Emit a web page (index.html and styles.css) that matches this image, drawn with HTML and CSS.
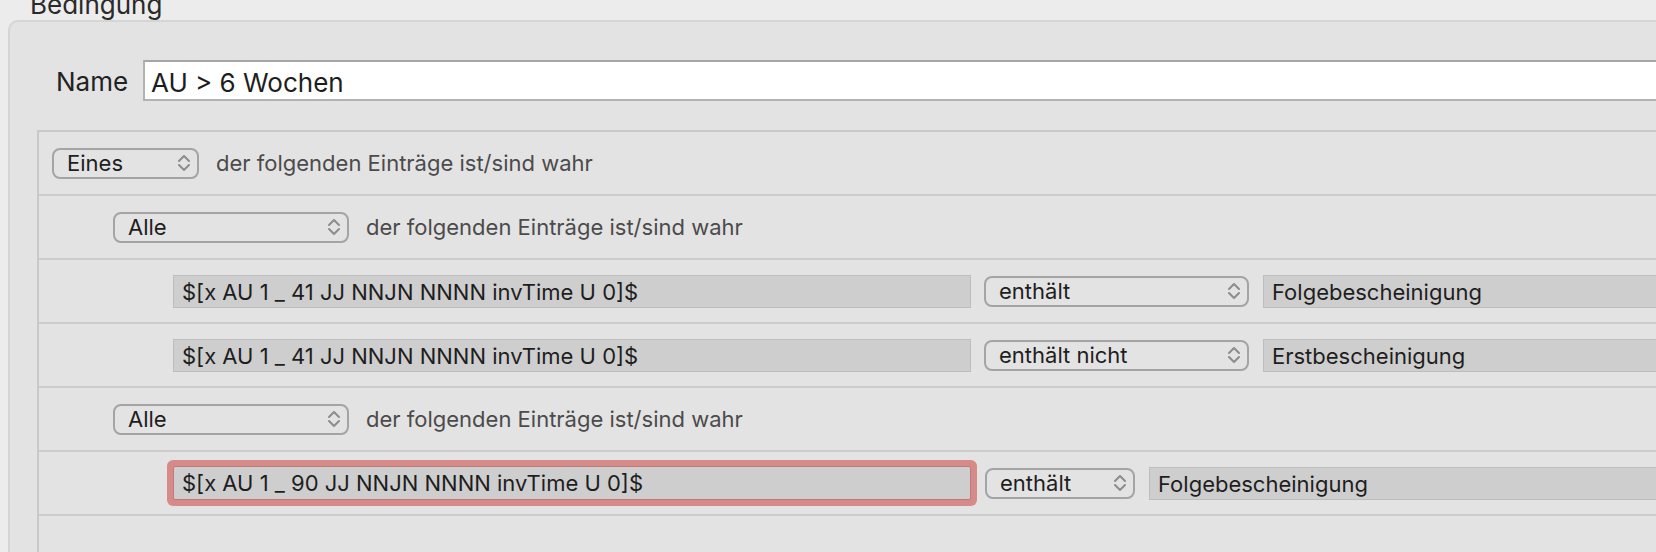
FILE: index.html
```html
<!DOCTYPE html>
<html lang="de">
<head>
<meta charset="utf-8">
<title>Bedingung</title>
<link rel="stylesheet" href="styles.css">
</head>
<body>
<div class="window">
  <div class="title">Bedingung</div>
  <div class="panel">
    <div class="name-row">
      <span class="name-label">Name</span>
      <div class="name-field">AU &gt; 6 Wochen</div>
    </div>
    <div class="rules">
      <div class="row level0">
        <div class="popup w-eines"><span>Eines</span><svg class="chev" viewBox="0 0 14 20" width="14" height="20"><polyline points="2,8 7,3 12,8"/><polyline points="2,12 7,17 12,12"/></svg></div>
        <span class="hint">der folgenden Einträge ist/sind wahr</span>
      </div>
      <div class="row level1">
        <div class="popup w-alle"><span>Alle</span><svg class="chev" viewBox="0 0 14 20" width="14" height="20"><polyline points="2,8 7,3 12,8"/><polyline points="2,12 7,17 12,12"/></svg></div>
        <span class="hint">der folgenden Einträge ist/sind wahr</span>
      </div>
      <div class="row level2">
        <div class="field key">$[x AU 1 _ 41 JJ NNJN NNNN invTime U 0]$</div>
        <div class="popup w-op"><span>enthält</span><svg class="chev" viewBox="0 0 14 20" width="14" height="20"><polyline points="2,8 7,3 12,8"/><polyline points="2,12 7,17 12,12"/></svg></div>
        <div class="field value">Folgebescheinigung</div>
      </div>
      <div class="row level2">
        <div class="field key">$[x AU 1 _ 41 JJ NNJN NNNN invTime U 0]$</div>
        <div class="popup w-op"><span>enthält nicht</span><svg class="chev" viewBox="0 0 14 20" width="14" height="20"><polyline points="2,8 7,3 12,8"/><polyline points="2,12 7,17 12,12"/></svg></div>
        <div class="field value">Erstbescheinigung</div>
      </div>
      <div class="row level1">
        <div class="popup w-alle"><span>Alle</span><svg class="chev" viewBox="0 0 14 20" width="14" height="20"><polyline points="2,8 7,3 12,8"/><polyline points="2,12 7,17 12,12"/></svg></div>
        <span class="hint">der folgenden Einträge ist/sind wahr</span>
      </div>
      <div class="row level2">
        <div class="field key focused">$[x AU 1 _ 90 JJ NNJN NNNN invTime U 0]$</div>
        <div class="popup w-op-short"><span>enthält</span><svg class="chev" viewBox="0 0 14 20" width="14" height="20"><polyline points="2,8 7,3 12,8"/><polyline points="2,12 7,17 12,12"/></svg></div>
        <div class="field value">Folgebescheinigung</div>
      </div>
      <div class="row empty"></div>
    </div>
  </div>
</div>
</body>
</html>
```

FILE: styles.css
```css
html {
  overflow: hidden;
  background: #ececec;
}

body {
  margin: 0;
  padding: 0;
  background: #ececec;
  font-family: Inter, "Liberation Sans", sans-serif;
  color: #222222;
}

.window {
  width: 1720px;
  height: 552px;
  overflow: hidden;
}

.title {
  height: 30px;
  line-height: 30px;
  margin-top: -10px;
  padding-left: 30px;
  font-size: 26px;
  color: #2a2a2a;
}

.panel {
  margin-left: 8px;
  background: #e3e3e3;
  border: 2px solid #d5d5d5;
  border-radius: 10px;
  padding-top: 38px;
  height: 600px;
}

.name-row {
  display: flex;
  align-items: center;
  gap: 18px;
  padding-left: 46px;
  height: 41px;
}

.name-label {
  font-size: 26px;
  line-height: 30px;
  padding-top: 3px;
  color: #222222;
  width: 69px;
}

.name-field {
  flex: 1;
  height: 41px;
  box-sizing: border-box;
  background: #ffffff;
  border: 2px solid #b2b2b2;
  border-top-color: #a6a6a6;
  border-right: none;
  padding-left: 6px;
  font-size: 26px;
  line-height: 41px;
  color: #1e1e1e;
}

.rules {
  margin-top: 29px;
  margin-left: 27px;
  border-left: 2px solid #c9c9c9;
  border-top: 2px solid #c9c9c9;
  height: 500px;
}

.row {
  display: flex;
  align-items: center;
  height: 62px;
  border-bottom: 2px solid #cbcbcb;
  font-size: 22px;
}

.row.empty {
  border-bottom: none;
}

.level0 { padding-left: 13px; }
.level1 { padding-left: 74px; }
.level2 { padding-left: 134px; }

.popup {
  display: flex;
  align-items: center;
  justify-content: space-between;
  box-sizing: border-box;
  height: 31px;
  border: 2px solid #a4a4a4;
  border-radius: 8px;
  padding-left: 13px;
  padding-right: 6px;
  color: #1e1e1e;
  background: #e3e3e3;
}

.chev {
  fill: none;
  stroke: #8c8c8c;
  stroke-width: 2;
  stroke-linecap: round;
  stroke-linejoin: round;
}

.w-eines { width: 147px; }
.w-alle { width: 236px; }
.w-op { width: 265px; }
.w-op-short { width: 150px; }

.hint {
  margin-left: 17px;
  color: #4b4b4b;
}

.field {
  box-sizing: border-box;
  height: 33px;
  line-height: 33px;
  background: #cecece;
  border: 1px solid #bdbdbd;
  padding-left: 8px;
  color: #1e1e1e;
  white-space: nowrap;
}

.field.key {
  width: 798px;
  margin-right: 13px;
}

.field.focused {
  height: 34px;
  border-color: #c27878;
  box-shadow: 0 0 0 6px #d68a8a;
  border-radius: 2px;
  margin-right: 14px;
}

.field.value {
  flex: 1;
  margin-left: 14px;
  border-right: none;
}
```
